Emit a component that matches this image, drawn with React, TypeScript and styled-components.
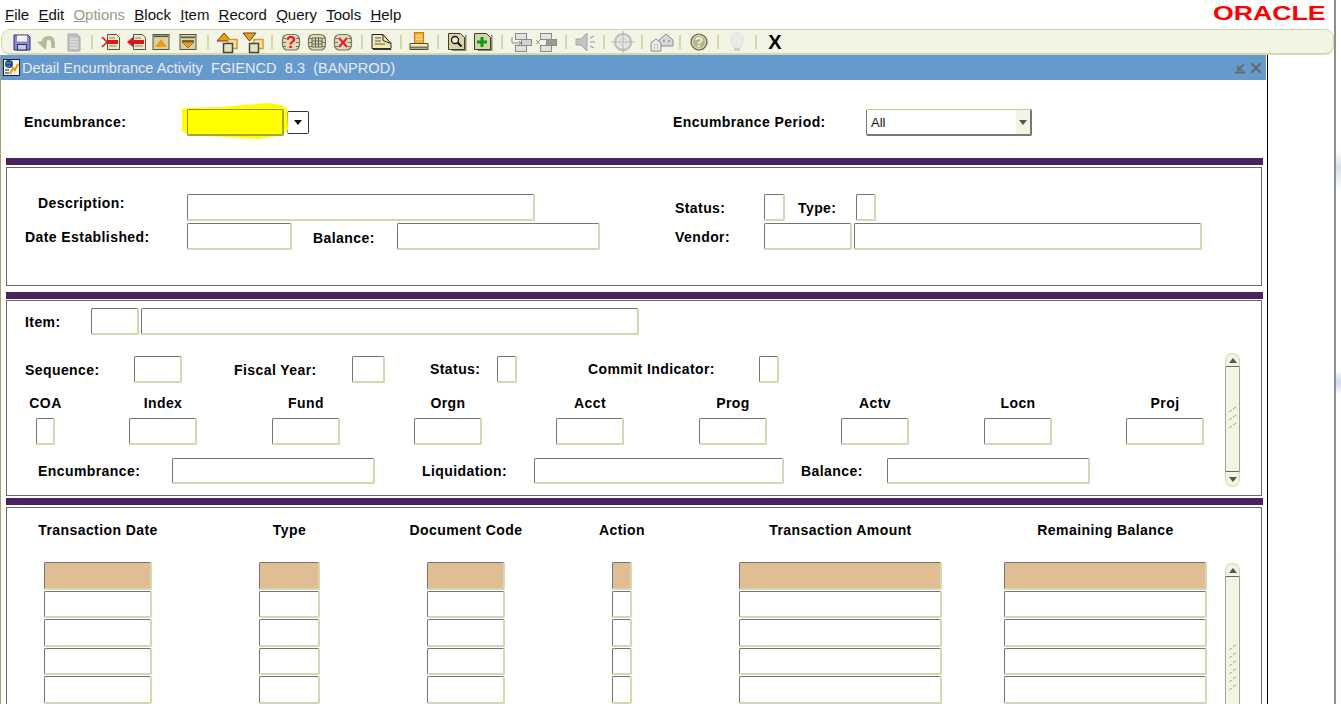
import React from 'react';
import styled, { createGlobalStyle } from 'styled-components';

const Global = createGlobalStyle`
  html, body { margin: 0; padding: 0; background: #fff; overflow: hidden; }
  * { box-sizing: border-box; }
`;

const Page = styled.div`
  width: 1341px; height: 704px; overflow: hidden; display: flex;
  font-family: "Liberation Sans", Arial, sans-serif; color: #000;
`;
const Main = styled.div`
  width: 1334px; display: flex; flex-direction: column; flex: none;
`;
const Edge = styled.div`
  flex: 1; border-left: 2px solid #8f8f8f;
  background: linear-gradient(180deg, #fff 0, #fff 150px, #d5e2f0 168px, #fff 190px, #fff 370px, #cfdcec 382px, #fff 395px, #fbfbfb 100%);
`;
const MenuBar = styled.div`
  height: 29px; display: flex; align-items: center; padding-left: 5px; gap: 9.2px; position: relative;
`;
const MenuItem = styled.span<{ $off?: boolean }>`
  font-size: 15px; line-height: 18px; margin-top: 1px; color: ${p => (p.$off ? '#9a9a86' : '#111')};
`;
const Logo = styled.div`
  margin-left: auto; margin-right: 7px; margin-top: -3px; width: 114px; font-size: 21px; font-weight: 700; line-height: 18px;
  color: #f00; transform: scaleX(1.27); transform-origin: left center; white-space: nowrap; letter-spacing: 0;
`;
const Toolbar = styled.div`
  height: 26px; margin-left: 1px; flex: none; display: flex; align-items: center; background: #f4f4e4;
  border: 1px solid #d3d7ac; border-bottom-width: 2px; border-radius: 9px;
`;
const Slot = styled.div<{ $ml: number }>`
  width: 26px; height: 24px; flex: none; margin-left: ${p => p.$ml}px; display: flex; align-items: center; justify-content: center;
`;
const Sep = styled.div<{ $ml: number }>`
  width: 2px; height: 14px; flex: none; margin-left: ${p => p.$ml}px; background: #d3d7ac;
`;
const CloseX = styled.span`
  font-size: 20px; font-weight: 700; line-height: 24px; color: #000;
`;
const Win = styled.div`
  width: 1268px; flex: 1; min-height: 0; display: flex; flex-direction: column;
  border-left: 1px solid #a3a36b; border-right: 1px solid #000;
`;
const TitleBar = styled.div`
  height: 25px; margin-right: 1px; flex: none; background: #6699cc; display: flex; align-items: center; padding-left: 2px;
`;
const TitleText = styled.span`
  margin-left: 2px; font-size: 14.6px; color: #e6ecf2; white-space: pre;
`;
const WinBtns = styled.div`
  margin-left: auto; margin-right: 3px; display: flex; gap: 2px; align-items: center;
`;
const Body = styled.div`
  flex: 1; min-height: 0; padding: 0 4px 0 5px; display: flex; flex-direction: column;
`;
const TopForm = styled.div`
  height: 78px; flex: none; display: flex; align-items: flex-start; padding-top: 29px;
`;
const Rule = styled.div<{ $mt: number; $h: number }>`
  height: ${p => p.$h}px; margin-top: ${p => p.$mt}px; flex: none; background: #4b2260;
`;
const Panel = styled.div<{ $h: number; $mt: number }>`
  height: ${p => p.$h}px; flex: none; margin-top: ${p => p.$mt}px; margin-right: 1px; border: 1px solid #6a6a6a; display: flex; align-items: flex-start;
`;
const StackPanel = styled(Panel)`
  flex-direction: column;
`;
const FormColumn = styled.div`
  width: 1218px; flex: none; display: flex; flex-direction: column;
`;
const Row = styled.div<{ $mt: number }>`
  display: flex; align-items: flex-start; margin-top: ${p => p.$mt}px;
`;
const Label = styled.div<{ $ml?: number; $w: number; $mt?: number }>`
  flex: none; width: ${p => p.$w}px; margin-left: ${p => p.$ml ?? 0}px; margin-top: ${p => p.$mt ?? 0}px;
  font-size: 14px; font-weight: 700; line-height: 16px; letter-spacing: 0.42px; white-space: nowrap; color: #000;
`;
const Field = styled.div<{ $ml?: number; $w: number; $h?: number; $bg?: string; $edge?: string }>`
  flex: none; position: relative; width: ${p => p.$w}px; height: ${p => p.$h ?? 27}px; margin-left: ${p => p.$ml ?? 0}px;
  background: ${p => p.$bg ?? '#fff'}; border-radius: 2px;
  border-style: solid; border-width: 1px 2px 2px 1px;
  border-color: ${p => p.$edge ?? '#757575 #d3d8b0 #d3d8b0 #757575'};
`;
const HighlightWrap = styled.div`
  position: relative; flex: none;
`;
const Marker = styled.svg`
  position: absolute; left: -6px; top: -6px; width: 112px; height: 38px;
`;
const LovBtn = styled.div`
  flex: none; width: 22px; height: 23px; margin: 2px 0 0 3px; border: 1px solid #333; border-radius: 2px; border-left-color: #888;
  display: flex; align-items: center; justify-content: center; background: #fff;
`;
const Arrow = styled.span<{ $c?: string }>`
  width: 0; height: 0; border-left: 4px solid transparent; border-right: 4px solid transparent; border-top: 5px solid ${p => p.$c ?? '#111'};
`;
const SelectBox = styled.div`
  flex: none; width: 166px; height: 27px; margin-left: 2px; display: flex; background: #fff; border-radius: 2px;
  border-style: solid; border-width: 1px 2px 2px 1px; border-color: #c5ca9a #777 #777 #777;
`;
const SelectText = styled.div`
  flex: 1; padding-left: 4px; font-size: 13px; line-height: 26px; color: #111;
`;
const SelectBtn = styled.div`
  width: 14px; background: #f4f4e4; display: flex; align-items: center; justify-content: center;
`;
const Cell = styled.div<{ $ml: number; $w: number }>`
  flex: none; width: ${p => p.$w}px; margin-left: ${p => p.$ml}px; display: flex; flex-direction: column; align-items: center;
`;
const Head = styled.div<{ $mb: number }>`
  font-size: 14px; font-weight: 700; line-height: 16px; letter-spacing: 0.42px; white-space: nowrap; margin-bottom: ${p => p.$mb}px;
`;
const Stack = styled.div`
  align-self: stretch; display: flex; flex-direction: column; gap: 1px;
`;
const GridField = styled.div<{ $on?: boolean }>`
  height: 27.5px; flex: none; border-radius: 2px; background: ${p => (p.$on ? '#e0bd92' : '#fff')};
  border-style: solid; border-width: 1px 2px 2px 1px; border-color: #757575 #d3d8b0 #d3d8b0 #757575;
`;
const Scroller = styled.div<{ $mt: number; $ml: number; $h: number }>`
  flex: none; width: 15px; height: ${p => p.$h}px; margin-top: ${p => p.$mt}px; margin-left: ${p => p.$ml}px; display: flex; flex-direction: column;
`;
const Cap = styled.div<{ $down?: boolean }>`
  height: ${p => (p.$down ? 16 : 14)}px; flex: none; background: #f4f4e4; display: flex; align-items: center; justify-content: center;
  border: 1px solid #d3d8b0;
  ${p => (p.$down
    ? 'border-radius: 0 0 8px 8px; border-top: 1px solid #666;'
    : 'border-radius: 8px 8px 0 0; border-bottom: 1px solid #666;')}
`;
const Track = styled.div`
  flex: 1; background: #f4f4e4; border-left: 1px solid #a2a2a2; border-right: 1px solid #a2a2a2;
  display: flex; align-items: center; justify-content: center;
`;
const UpArrow = styled.span`
  width: 0; height: 0; border-left: 4px solid transparent; border-right: 4px solid transparent; border-bottom: 5px solid #555;
`;

const OL = '#57573a';
const BG = '#d6d3a8';

const Saved = () => (
  <svg width="26" height="24">
    <path d="M6 5h14l2 2v13H6z" fill="#8a8ad2" stroke="#303078" />
    <rect x="9" y="5.500" width="10" height="6" fill="#f2f2fa" />
    <rect x="9.500" y="14.500" width="9" height="5.500" fill="#c8c8d8" stroke="#303078" />
  </svg>
);
const Undo = () => (
  <svg width="26" height="24">
    <path d="M10 15Q10 8 16 8Q21 8 20 18" fill="none" stroke="#b6ba9c" strokeWidth="4" />
    <path d="M4 12l9 8 1-10z" fill="#b6ba9c" />
  </svg>
);
const GrayDoc = () => (
  <svg width="26" height="24">
    <path d="M7 4h9l3 3v14H7z" fill="#c2c2c2" stroke="#a8a8a8" />
    <path d="M9 9h8M9 12h8M9 15h8M9 18h8" stroke="#eee" />
  </svg>
);
const DocBar = ({ dir }: { dir: 'r' | 'l' }) => (
  <svg width="26" height="24">
    <path d="M8.500 4.500h9l3 3v12h-12z" fill="#ecebca" stroke={OL} />
    <path d="M10 8h6M10 16h8" stroke="#8a8a6a" />
    <rect x="9" y="10" width="10" height="4" fill="#e8101a" />
    {dir === 'r'
      ? <path d="M3 7l5 5-5 5" fill="#fff" stroke="#e8101a" strokeWidth="1.600" />
      : <path d="M8 7l-6 5 6 5z" fill="#e8101a" />}
  </svg>
);
const BlockMove = ({ up }: { up?: boolean }) => (
  <svg width="26" height="24">
    <rect x="5" y="4.500" width="16" height="15" fill={BG} stroke={OL} />
    <rect x="6" y={up ? 5.500 : 6.500} width="14" height="1.600" fill={OL} />
    {up ? <path d="M7 17h12l-6-8z" fill="#f59a13" /> : <><rect x="7" y="10" width="12" height="2" fill="#7a6a30" /><path d="M7 12h12l-6 6z" fill="#f59a13" stroke="#5c4a20" strokeWidth=".6" /></>}
  </svg>
);
const Stacks = ({ up }: { up?: boolean }) => (
  <svg width="28" height="24">
    <path d={up ? 'M3 11L10 3l7 8z' : 'M3 3h13l-6.500 8z'} fill="#f39a17" stroke="#5e4416" />
    <rect x="14" y="9.500" width="9" height="9" fill="#f5e4a8" stroke="#d99a20" strokeWidth="1.500" />
    <rect x="9.500" y="13.500" width="9" height="9" fill="#e4e4c4" stroke="#444" strokeWidth="1.500" />
  </svg>
);
const Barrel = ({ children }: { children?: React.ReactNode }) => (
  <svg width="26" height="24">
    <rect x="4.500" y="4.500" width="17" height="15.500" rx="5" fill="#dedcb8" stroke="#77775a" strokeWidth="1.200" />
    <path d="M5 8.500h3M18 8.500h3M5 12.500h3M18 12.500h3M5 16.500h3M18 16.500h3" stroke="#77775a" />
    {children}
  </svg>
);
const FoldDoc = () => (
  <svg width="26" height="24">
    <path d="M4 4.500h11l8 9v5H4z" fill="#f1e9b4" stroke="#222" />
    <path d="M15 4.500v6l8 3" fill="none" stroke="#222" />
    <path d="M7 8h6M7 11h6M7 14h10" stroke="#555" />
    <rect x="5" y="18" width="18" height="2" fill="#333" />
  </svg>
);
const Printer = () => (
  <svg width="26" height="24">
    <rect x="8.500" y="2.500" width="9" height="11" fill="#ffb02a" stroke="#d87a00" />
    <path d="M10 6h6M10 9h6" stroke="#fff" />
    <path d="M4 13.500h18v6H4z" fill="#ecebca" stroke="#4e4e30" />
    <rect x="4" y="16.500" width="18" height="2" fill="#77774e" />
  </svg>
);
const DocCorner = ({ children }: { children: React.ReactNode }) => (
  <svg width="26" height="24">
    <path d="M21 5h1.500v16H8v-1.500h13z" fill="#8a8a6a" />
    <path d="M4.500 3.500h12l4 4v12h-16z" fill={BG} stroke="#3f3f28" />
    {children}
  </svg>
);
const GrayBlocks = ({ x }: { x?: boolean }) => (
  <svg width="26" height="24">
    <rect x="7.500" y="3.500" width="11" height="6" fill="#e2e2e2" stroke="#8a8a8a" />
    <rect x="7.500" y="15.500" width="11" height="6" fill="#e2e2e2" stroke="#8a8a8a" />
    <rect x="13.500" y="9.500" width="10" height="6" fill={x ? '#9a9a9a' : '#d2d2d2'} stroke="#8a8a8a" />
    {x ? <path d="M3 10l4 4M7 10l-4 4" stroke="#999" /> : <path d="M4 7v6h9M11 11l2 2-2 2" fill="none" stroke="#8a8a8a" />}
  </svg>
);
const Speaker = () => (
  <svg width="26" height="24">
    <path d="M4 9h5l6-6v18l-6-6H4z" fill="#c4c4c4" stroke="#a6a6a6" />
    <path d="M18 8l4-2M18 12h5M18 16l4 2" stroke="#9a9a9a" strokeWidth="1.200" />
  </svg>
);
const Target = () => (
  <svg width="26" height="24">
    <circle cx="13" cy="12" r="8" fill="#ececec" stroke="#c2c2c2" strokeWidth="2.500" />
    <circle cx="13" cy="12" r="4" fill="none" stroke="#cfcfcf" />
    <path d="M1 12h24M13 1v22" stroke="#b5b5b5" />
  </svg>
);
const Houses = () => (
  <svg width="26" height="24">
    <path d="M11 10l7-6 7 6v6H11z" fill="#d8d8d8" stroke="#8c8c8c" />
    <path d="M3 13l5-4 5 4v8H3z" fill="#ececec" stroke="#8c8c8c" />
    <path d="M15 11h2M20 11h2M6 15h1M9 15h1M6 18h1M9 18h1" stroke="#777" />
  </svg>
);
const Help = () => (
  <svg width="26" height="24">
    <circle cx="13" cy="12" r="8" fill="#b7b48e" stroke="#66664a" strokeWidth="1.200" />
    <circle cx="13" cy="12" r="6.500" fill="none" stroke="#e2e2c4" />
    <text x="13" y="17" textAnchor="middle" fontSize="14" fontWeight="700" fontFamily="Liberation Sans" fill="#f0f0dc">?</text>
  </svg>
);
const Bulb = () => (
  <svg width="26" height="24">
    <path d="M13 3a6.500 6.500 0 0 1 4 11.500V18H9v-3.500A6.500 6.500 0 0 1 13 3z" fill="#eaeaea" stroke="#e0e0e0" />
    <rect x="10" y="18" width="6" height="3" fill="#cfcfcf" />
  </svg>
);
const QText = () => <text x="13" y="18" textAnchor="middle" fontSize="17" fontWeight="700" fontFamily="Liberation Sans" fill="#f0142a">?</text>;

const tools: { c: number; sep?: boolean; el?: React.ReactNode }[] = [
  { c: 20, el: <Saved /> }, { c: 45, el: <Undo /> }, { c: 73, el: <GrayDoc /> }, { c: 91, sep: true },
  { c: 111, el: <DocBar dir="r" /> }, { c: 137, el: <DocBar dir="l" /> }, { c: 160, el: <BlockMove up /> }, { c: 187, el: <BlockMove /> }, { c: 207, sep: true },
  { c: 226, el: <Stacks up /> }, { c: 252, el: <Stacks /> }, { c: 271, sep: true },
  { c: 290, el: <Barrel><QText /></Barrel> },
  { c: 316, el: <Barrel><path d="M8 8h10v9H8zM8 11h10M8 14h10M11.500 8v9M14.500 8v9" fill="none" stroke="#66664c" /></Barrel> },
  { c: 342, el: <Barrel><path d="M9 8l8 9M17 8l-8 9" stroke="#f0142a" strokeWidth="2" /></Barrel> }, { c: 361, sep: true },
  { c: 380, el: <FoldDoc /> }, { c: 400, sep: true }, { c: 418, el: <Printer /> }, { c: 437, sep: true },
  { c: 456, el: <DocCorner><circle cx="11" cy="10" r="3.500" fill="#efefd6" stroke="#111" strokeWidth="1.300" /><path d="M13.500 12.500l4 4" stroke="#111" strokeWidth="2" /></DocCorner> },
  { c: 482, el: <DocCorner><path d="M7 12h10M12 7v10" stroke="#0a9a14" strokeWidth="3" /></DocCorner> }, { c: 501, sep: true },
  { c: 520, el: <GrayBlocks /> }, { c: 545, el: <GrayBlocks x /> }, { c: 565, sep: true },
  { c: 584, el: <Speaker /> }, { c: 603, sep: true }, { c: 622, el: <Target /> }, { c: 641, sep: true },
  { c: 660, el: <Houses /> }, { c: 679, sep: true }, { c: 698, el: <Help /> }, { c: 717, sep: true },
  { c: 736, el: <Bulb /> }, { c: 755, sep: true }, { c: 774, el: <CloseX>X</CloseX> },
];

const menu = ['File', 'Edit', 'Options', 'Block', 'Item', 'Record', 'Query', 'Tools', 'Help'];

const Grip = ({ n }: { n: number }) => (
  <svg width="9" height={n * 8 + 2}>
    {Array.from({ length: n }).map((_, i) => (
      <g key={i} stroke="#a4a67e">
        <path d={`M1 ${i * 8 + 6}l3 -2`} />
        <path d={`M5 ${i * 8 + 3}l3 -2`} />
      </g>
    ))}
  </svg>
);

const columns = [
  { t: 'Transaction Date', ml: 37, w: 108 },
  { t: 'Type', ml: 107, w: 61 },
  { t: 'Document Code', ml: 107, w: 78 },
  { t: 'Action', ml: 107, w: 20 },
  { t: 'Transaction Amount', ml: 107, w: 203 },
  { t: 'Remaining Balance', ml: 62, w: 203 },
];

const segments = [
  { t: 'COA', ml: 29, w: 19 }, { t: 'Index', ml: 74, w: 68 }, { t: 'Fund', ml: 75, w: 68 },
  { t: 'Orgn', ml: 74, w: 68 }, { t: 'Acct', ml: 74, w: 68 }, { t: 'Prog', ml: 75, w: 68 },
  { t: 'Actv', ml: 74, w: 68 }, { t: 'Locn', ml: 75, w: 68 }, { t: 'Proj', ml: 74, w: 78 },
];

let cursor = 1;
const placed = tools.map(t => {
  const half = t.sep ? 1 : 13;
  const ml = t.c - half - cursor;
  cursor = t.c + half;
  return { ...t, ml };
});

export default function App() {
  return (
    <Page>
      <Global />
      <Main>
        <MenuBar>
          {menu.map(m => (
            <MenuItem key={m} $off={m === 'Options'}><u>{m[0]}</u>{m.slice(1)}</MenuItem>
          ))}
          <Logo>ORACLE</Logo>
        </MenuBar>
        <Toolbar>
          {placed.map((t, i) => t.sep ? <Sep key={i} $ml={t.ml} /> : <Slot key={i} $ml={t.ml}>{t.el}</Slot>)}
        </Toolbar>
        <Win>
          <TitleBar>
            <svg width="17" height="17">
              <rect x="0.500" y="0.500" width="16" height="16" fill="#f4f4f8" stroke="#1c2238" />
              <circle cx="6" cy="5" r="4" fill="#2a3fa0" />
              <path d="M3 4h5M4 7h3" stroke="#4aa050" strokeWidth="1.500" />
              <path d="M7 15l3-6 2 2 3-6" stroke="#e8a000" strokeWidth="2" fill="none" />
              <path d="M2 11h4M2 14h4" stroke="#222" />
            </svg>
            <TitleText>Detail Encumbrance Activity  FGIENCD  8.3  (BANPROD)</TitleText>
            <WinBtns>
              <svg width="14" height="14"><path d="M2 11.500h10" stroke="#666" strokeWidth="2" /><path d="M11 3L6 8M5 4.500V9h5" stroke="#666" strokeWidth="1.600" fill="none" /></svg>
              <svg width="14" height="14"><path d="M2.500 2.500l9 9M11.500 2.500l-9 9" stroke="#666" strokeWidth="2" /></svg>
            </WinBtns>
          </TitleBar>
          <Body>
            <TopForm>
              <Label $ml={18} $w={163} $mt={5}>Encumbrance:</Label>
              <HighlightWrap>
                <Marker viewBox="0 0 112 38">
                  <path d="M1 6 L6 5 L40 4 L62 2 L88 0 L100 2 L106 5 L107 27 L96 33 L76 36 L46 34 L8 32 L1 28Z" fill="#ffff00" />
                </Marker>
                <Field $w={97} $bg="#ffff00" $edge="#8d8d30 #a6a640 #a6a640 #8d8d30" />
              </HighlightWrap>
              <LovBtn><Arrow /></LovBtn>
              <Label $ml={364} $w={191} $mt={5}>Encumbrance Period:</Label>
              <SelectBox>
                <SelectText>All</SelectText>
                <SelectBtn><Arrow $c="#555" /></SelectBtn>
              </SelectBox>
            </TopForm>
            <Rule $mt={0} $h={7} />
            <StackPanel $mt={2} $h={119}>
              <Row $mt={26}>
                <Label $ml={31} $w={149} $mt={1}>Description:</Label>
                <Field $w={348} />
                <Label $ml={140} $w={89} $mt={6}>Status:</Label>
                <Field $w={21} />
                <Label $ml={13} $w={58} $mt={6}>Type:</Label>
                <Field $w={20} />
              </Row>
              <Row $mt={2}>
                <Label $ml={18} $w={162} $mt={6}>Date Established:</Label>
                <Field $w={105} />
                <Label $ml={21} $w={84} $mt={7}>Balance:</Label>
                <Field $w={203} />
                <Label $ml={75} $w={89} $mt={6}>Vendor:</Label>
                <Field $w={88} />
                <Field $ml={2} $w={348} />
              </Row>
            </StackPanel>
            <Rule $mt={6} $h={7} />
            <Panel $mt={1} $h={196}>
              <FormColumn>
                <Row $mt={7}>
                  <Label $ml={18} $w={66} $mt={6}>Item:</Label>
                  <Field $w={48} />
                  <Field $ml={2} $w={498} />
                </Row>
                <Row $mt={21}>
                  <Label $ml={18} $w={109} $mt={6}>Sequence:</Label>
                  <Field $w={48} />
                  <Label $ml={52} $w={118} $mt={6}>Fiscal Year:</Label>
                  <Field $w={33} />
                  <Label $ml={45} $w={67} $mt={5}>Status:</Label>
                  <Field $w={20} />
                  <Label $ml={71} $w={171} $mt={5}>Commit Indicator:</Label>
                  <Field $w={20} />
                </Row>
                <Row $mt={12}>
                  {segments.map(s => (
                    <Cell key={s.t} $ml={s.ml} $w={s.w}>
                      <Head $mb={7}>{s.t}</Head>
                      <Field $w={s.w} />
                    </Cell>
                  ))}
                </Row>
                <Row $mt={13}>
                  <Label $ml={31} $w={134} $mt={5}>Encumbrance:</Label>
                  <Field $w={203} $h={26} />
                  <Label $ml={47} $w={112} $mt={5}>Liquidation:</Label>
                  <Field $w={250} $h={26} />
                  <Label $ml={17} $w={86} $mt={5}>Balance:</Label>
                  <Field $w={203} $h={26} />
                </Row>
              </FormColumn>
              <Scroller $mt={52} $ml={0} $h={134}>
                <Cap><UpArrow /></Cap>
                <Track><Grip n={3} /></Track>
                <Cap $down><Arrow $c="#555" /></Cap>
              </Scroller>
            </Panel>
            <Rule $mt={2} $h={7} />
            <Panel $mt={2} $h={300}>
              <Row $mt={14}>
                {columns.map(c => (
                  <Cell key={c.t} $ml={c.ml} $w={c.w}>
                    <Head $mb={24}>{c.t}</Head>
                    <Stack>
                      {[0, 1, 2, 3, 4, 5].map(i => <GridField key={i} $on={i === 0} />)}
                    </Stack>
                  </Cell>
                ))}
                <Scroller $mt={41} $ml={18} $h={214}>
                  <Cap><UpArrow /></Cap>
                  <Track><Grip n={6} /></Track>
                  <Cap $down><Arrow $c="#555" /></Cap>
                </Scroller>
              </Row>
            </Panel>
          </Body>
        </Win>
      </Main>
      <Edge />
    </Page>
  );
}
